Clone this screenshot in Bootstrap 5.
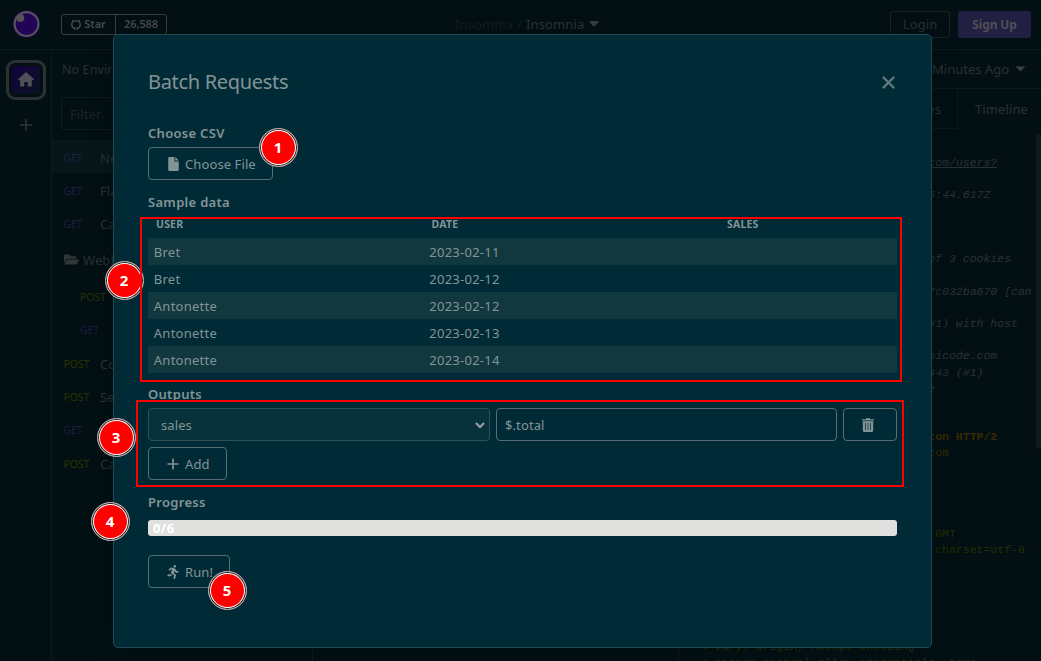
<!DOCTYPE html>
<html lang="en">
<head>
<meta charset="utf-8">
<title>Insomnia – Batch Requests</title>
<meta name="viewport" content="width=device-width, initial-scale=1">
<link href="https://cdn.jsdelivr.net/npm/bootstrap@5.3.0/dist/css/bootstrap.min.css" rel="stylesheet">
<style>
:root{--ink:#839496;--dim:#2a3132;--rule:#0d1b1e;--bg:#021014}
body{font-family:"Noto Sans","Open Sans",sans-serif;font-size:13px;line-height:20px;letter-spacing:.1px;color:var(--dim);background:var(--bg);width:1041px;height:661px;overflow:hidden;position:relative}
svg{display:block;flex:none}
.topbar{height:50px;border-bottom:1px solid var(--rule)}
.star-group{height:21px;border:1px solid #3a3f40;border-radius:3px;font-size:11px;letter-spacing:-.1px;font-weight:600;color:#454b4e;margin-left:21px;width:106px;margin-top:-1px}
.star-group>span+span{border-left:1px solid #3a3f40}
.rail{width:52px;border-right:1px solid var(--rule)}
.home{width:40px;height:40px;border:3px solid #2c3133;border-radius:9px;margin-top:10px;padding:3px}
.home>div{border-radius:4px;background:linear-gradient(135deg,#15023f,#071322);width:100%;height:100%}
.requests{width:261px;border-right:1px solid var(--rule)}
.filter-box{height:33px;margin:17px 9px 10px;border:1px solid #0f1c1e;border-radius:3px;padding-left:8px;color:#1c2526}
.req{height:33.4px;padding-left:11.5px;padding-top:2px}
.req.on{background:#071719}
.verb{width:36.5px;font-size:10.5px;letter-spacing:-.1px;color:#1b1e42}
.verb.post{color:#2a3100}
.req.nested{padding-left:28px}
.editor{width:366px;border-right:1px solid var(--rule)}
.btn-login{width:60px;height:27px;border:1px solid #182426;border-radius:3px;margin-right:8px;padding-bottom:1px}
.btn-sign{width:73px;height:27px;border-radius:3px;background:#211f42;color:#514e55;font-weight:700;font-size:12px;letter-spacing:-.1px;margin-right:10px}
.hist{height:39px;border-bottom:1px solid var(--rule);padding-right:16px;letter-spacing:0}
.tabs{height:40px}
.tab-prev{width:279px;border-right:1px solid var(--rule);border-bottom:1px solid var(--rule);padding-right:16px}
.log{font:italic 11.5px/16.16px "Liberation Mono",monospace;letter-spacing:0;padding:25.5px 0 0 21.5px;white-space:pre;color:#2a3233;height:532px;overflow:hidden}
.log div{height:16.16px;padding-left:33ch}
.log .res{font-style:normal;color:#252d00}
.log .hd{font-style:normal;color:#382a02}
.log .full{padding-left:0}
.scroller{width:5px;border-radius:3px;background:#101b1d;height:315px;right:0;top:134px}
.dialog{left:113px;top:34px;width:819px;height:614px;background:#002b36;border:1px solid #234950;border-radius:5px;padding:35px 34px;color:var(--ink);box-shadow:0 0 24px rgba(0,0,0,.25)}
.dialog h1{font-size:20px;line-height:24px;margin:0;font-weight:400;letter-spacing:-.32px}
.lbl{font-weight:600;height:20px;letter-spacing:.3px}
.ctl{height:33px;border:1px solid #566f74;border-radius:4px;color:var(--ink)}
.grid-data{table-layout:fixed;width:749px;margin:4px 0 0;color:var(--ink)}
.grid-data th{padding:0 0 0 8px;height:22px;font-size:10.5px;line-height:12px;vertical-align:top;padding-top:2px;font-weight:700;letter-spacing:.2px}
.grid-data td{padding:1px 0 0 5.8px;height:27px;line-height:26px;letter-spacing:.25px}
.grid-data tr:nth-child(-n+3) td{padding-top:2px;line-height:25px}
.grid-data tbody tr:nth-child(odd){background:#11383f}
.bar{height:16px;border-radius:3px;background:#e0e0de;color:#fff;font-weight:700;font-size:13px;line-height:17px;padding-left:5px;letter-spacing:.4px}
.note{border:2px solid #f00}
.pin{width:39px;height:39px;border-radius:50%;background:#f00;color:#fff;font-weight:700;font-size:15px;border:1px solid #bbb;box-shadow:inset 0 0 0 1px #1a1a1a,inset 0 0 0 2px #fff}
</style>
</head>
<body>
<header class="topbar d-flex align-items-center position-relative">
  <svg width="28" height="28" viewBox="0 0 28 28" style="margin-left:12px;margin-top:-1px"><circle cx="14.500" cy="14" r="13.700" fill="#1e0551"/><circle cx="14.500" cy="14" r="11.900" fill="#210455" stroke="#55525a" stroke-width="2.200"/><circle cx="8.300" cy="8" r="4" fill="#55525a"/></svg>
  <div class="star-group d-flex align-items-center">
    <span class="d-flex align-items-center justify-content-center h-100" style="width:53px;gap:3px"><svg width="10" height="11" viewBox="0 0 16 17" fill="none" stroke="#454b4e" stroke-width="2.200"><path d="M6 14.500C3 13.800 1.200 11.300 1.200 8.300c0-1.600.5-2.900 1.500-4 0-.8 0-1.500.3-2.100 1 0 1.700.3 2.500.8 1.600-.4 3.400-.4 5 0 .8-.5 1.500-.8 2.500-.8.3.6.3 1.300.3 2.100 1 1.100 1.500 2.400 1.500 4 0 3-1.800 5.500-4.800 6.200M6 17v-4M10 17v-4"/></svg>Star</span>
    <span class="flex-fill h-100 d-flex align-items-center justify-content-center">26,588</span>
  </div>
  <div class="d-flex align-items-center gap-1" style="margin-left:288px;margin-top:-1px"><span style="color:#151e20">Insomnia</span><span style="color:#151e20">/</span><span style="color:#303536">Insomnia</span><svg width="10" height="6" viewBox="0 0 10 6" fill="#3a3e3f" style="margin-left:1px"><path d="M.5 0h9Q10 .4 9.600 1L5.500 5.500H4.500L.4 1Q0 .4.5 0z"/></svg></div>
  <div class="ms-auto d-flex"><div class="btn-login d-flex align-items-center justify-content-center">Login</div><div class="btn-sign d-flex align-items-center justify-content-center">Sign Up</div></div>
</header>
<div class="d-flex" style="height:611px">
  <nav class="rail d-flex flex-column align-items-center">
    <div class="home"><div class="d-flex align-items-center justify-content-center"><svg width="16" height="15" viewBox="0 0 16 15" fill="#505154" style="margin-top:-2px"><path d="M8 0 16 7.200 15 8.300H13.800V14Q13.800 14.500 13.200 14.500H9.700V10H6.300V14.500H2.800Q2.200 14.500 2.200 14V8.300H1L0 7.200z"/></svg></div></div>
    <svg width="12" height="12" viewBox="0 0 12 12" stroke="#2f3637" stroke-width="1.500" style="margin-top:19px"><path d="M6 0v12M0 6h12"/></svg>
  </nav>
  <section class="requests">
    <div style="padding:10px 0 0 10px;height:30px;font-size:12.500px;white-space:nowrap">No Environment</div>
    <div class="filter-box d-flex align-items-center">Filter</div>
    <div class="req on d-flex align-items-center"><span class="verb">GET</span>New</div>
    <div class="req d-flex align-items-center"><span class="verb">GET</span>Fla</div>
    <div class="req d-flex align-items-center"><span class="verb">GET</span>Cal</div>
    <div class="d-flex align-items-center" style="height:39px;padding-left:12px"><svg width="15" height="13" viewBox="0 50 576 412" fill="#303535"><path d="M572.694 292.093L500.270 416.248A63.997 63.997 0 0 1 444.989 448H45.025c-18.523 0-30.064-20.093-20.731-36.093l72.424-124.155A64 64 0 0 1 152 256h399.964c18.523 0 30.064 20.093 20.730 36.093zM152 224h328v-48c0-26.510-21.490-48-48-48H272l-64-64H48C21.490 64 0 85.490 0 112v278.046l69.077-118.418C86.214 242.250 117.989 224 152 224z"/></svg><span style="margin-left:4px">Webh</span></div>
    <div class="req nested d-flex align-items-center"><span class="verb post">POST</span></div>
    <div class="req nested d-flex align-items-center"><span class="verb">GET</span></div>
    <div class="req d-flex align-items-center"><span class="verb post">POST</span>Co</div>
    <div class="req d-flex align-items-center"><span class="verb post">POST</span>Se</div>
    <div class="req d-flex align-items-center"><span class="verb">GET</span></div>
    <div class="req d-flex align-items-center"><span class="verb post">POST</span>Cal</div>
  </section>
  <section class="editor"></section>
  <section class="flex-fill">
    <div class="hist d-flex align-items-center justify-content-end"><span style="margin-right:3px">5</span>Minutes Ago<svg width="9" height="6" viewBox="0 0 10 6" fill="#383d3e" style="margin-left:7px"><path d="M.5 0h9Q10 .4 9.600 1L5.500 5.500H4.500L.4 1Q0 .4.5 0z"/></svg></div>
    <div class="tabs d-flex"><div class="tab-prev d-flex align-items-center justify-content-end">es</div><div class="d-flex align-items-center" style="padding-left:17px">Timeline</div></div>
    <div class="log"><div><u>com/users?</u></div><div></div><div>5:44.617Z</div><div></div><div></div><div></div><div>of 3 cookies</div><div></div><div>7c032ba670 [can</div><div></div><div>#1) with host</div><div></div><div>picode.com</div><div>443 (#1)</div><div>e</div><div></div><div></div><div class="hd"><b>ton HTTP/2</b></div><div class="hd">com</div><div></div><div></div><div></div><div></div><div class="res"> GMT</div><div class="res"> charset=utf-8</div><div></div><div></div><div></div><div></div><div></div><div class="res full">&lt; vary: Origin, Accept-Encoding</div><div class="res full">&lt; access-control-allow-credentials: true</div></div>
  </section>
</div>
<div class="scroller position-absolute"></div>

<main class="dialog position-absolute">
  <div class="d-flex justify-content-between align-items-center" style="height:24px"><h1>Batch Requests</h1><svg width="13" height="13" viewBox="0 0 13 13" stroke="#5f7a7f" stroke-width="2.400" stroke-linecap="round" style="margin-right:2px"><path d="M1.500 1.500l10 10M11.500 1.500l-10 10"/></svg></div>
  <div class="lbl" style="margin-top:29px">Choose CSV</div>
  <div class="ctl d-flex align-items-center" style="width:125px;margin-top:4px;padding-left:19px"><svg width="11" height="14" viewBox="0 0 384 512" fill="#839496"><path d="M224 136V0H48C20 0 0 20 0 48v416c0 28 20 48 48 48h288c28 0 48-20 48-48V160H248c-13 0-24-11-24-24zm160-8H256V0z"/></svg><span style="margin-left:6px">Choose File</span></div>
  <div class="lbl" style="margin-top:12px">Sample data</div>
  <table class="grid-data">
    <colgroup><col style="width:275.500px"><col style="width:295.500px"><col></colgroup>
    <thead><tr><th>USER</th><th>DATE</th><th>SALES</th></tr></thead>
    <tbody>
      <tr><td>Bret</td><td>2023-02-11</td><td></td></tr>
      <tr><td>Bret</td><td>2023-02-12</td><td></td></tr>
      <tr><td>Antonette</td><td>2023-02-12</td><td></td></tr>
      <tr><td>Antonette</td><td>2023-02-13</td><td></td></tr>
      <tr><td>Antonette</td><td>2023-02-14</td><td></td></tr>
    </tbody>
  </table>
  <div class="lbl" style="margin-top:11px">Outputs</div>
  <div class="d-flex" style="gap:6px;margin-top:4px">
    <div class="ctl d-flex align-items-center justify-content-between" style="width:342px;background:#08323b;border-color:#2f5158;padding:1px 4px 0 12px">sales<svg width="10" height="7" viewBox="0 0 10 7" fill="none" stroke="#9aa5a5" stroke-width="2"><path d="M1 1l4 4 4-4"/></svg></div>
    <div class="ctl d-flex align-items-center" style="width:341px;padding:1px 0 0 8px">$.total</div>
    <div class="ctl d-flex align-items-center" style="width:54px;padding:1px 0 0 18px"><svg width="12" height="14" viewBox="0 0 12 14"><path d="M4 .2h4v1h4v1.300H0V1.200h4z M.8 3.300h10.400V12.500Q11.200 14 9.700 14H2.300Q.8 14 .8 12.500z" fill="#839496"/><path d="M3.500 5v7M6 5v7M8.500 5v7" stroke="#002b36" stroke-width=".7"/></svg></div>
  </div>
  <div class="ctl d-flex align-items-center" style="width:79px;margin-top:6px;padding-left:18px"><svg width="12" height="12" viewBox="0 0 12 12" stroke="#839496" stroke-width="1.600"><path d="M6 .5v11M.5 6h11"/></svg><span style="margin-left:6px">Add</span></div>
  <div class="lbl" style="margin-top:12px">Progress</div>
  <div class="bar" style="margin-top:8px">0/6</div>
  <div class="ctl d-flex align-items-center" style="width:82px;margin-top:19px;padding-left:18px"><svg width="12" height="14" viewBox="0 0 416 512" fill="#839496"><path d="M272 96c26.510 0 48-21.490 48-48S298.510 0 272 0s-48 21.490-48 48 21.490 48 48 48zM113.690 317.470l-14.800 34.520H32c-17.670 0-32 14.330-32 32s14.330 32 32 32h77.450c19.250 0 36.580-11.440 44.110-29.090l8.790-20.520-10.670-6.300c-17.320-10.230-30.060-25.370-37.990-42.610zM384 223.990h-44.030l-26.060-53.250c-12.500-25.550-35.450-44.230-61.780-50.940l-71.080-21.140c-28.300-6.800-57.770-.55-80.840 17.140l-39.670 30.410c-14.030 10.750-16.690 30.830-5.920 44.860s30.840 16.660 44.860 5.920l39.690-30.410c7.670-5.890 17.440-8 25.270-6.140l14.700 4.370-37.460 87.390c-12.620 29.480-1.310 64.010 26.300 80.310l84.980 50.170-27.470 87.730c-5.280 16.860 4.110 34.820 20.970 40.090 3.190 1 6.410 1.480 9.580 1.480 13.610 0 26.230-8.770 30.520-22.450l31.640-101.060c5.910-20.770-2.890-43.080-21.640-54.390l-61.240-36.140 31.310-78.280 20.270 41.430c8 16.340 24.920 26.890 43.110 26.890H384c17.670 0 32-14.330 32-32s-14.330-31.990-32-31.990z"/></svg><span style="margin-left:6px">Run!</span></div>
</main>

<!-- numbered callouts over the dialog -->
<div class="pin position-absolute d-flex align-items-center justify-content-center" style="left:258.500px;top:127.500px">1</div>
<div class="pin position-absolute d-flex align-items-center justify-content-center" style="left:104.500px;top:260.500px">2</div>
<div class="pin position-absolute d-flex align-items-center justify-content-center" style="left:96.500px;top:417.500px">3</div>
<div class="pin position-absolute d-flex align-items-center justify-content-center" style="left:90.500px;top:501.500px">4</div>
<div class="pin position-absolute d-flex align-items-center justify-content-center" style="left:207.500px;top:570.500px">5</div>
<div class="note position-absolute" style="left:140px;top:217px;width:762px;height:165px"></div>
<div class="note position-absolute" style="left:136px;top:400px;width:768px;height:87px"></div>
<script src="https://cdn.jsdelivr.net/npm/bootstrap@5.3.0/dist/js/bootstrap.bundle.min.js"></script>
</body>
</html>
